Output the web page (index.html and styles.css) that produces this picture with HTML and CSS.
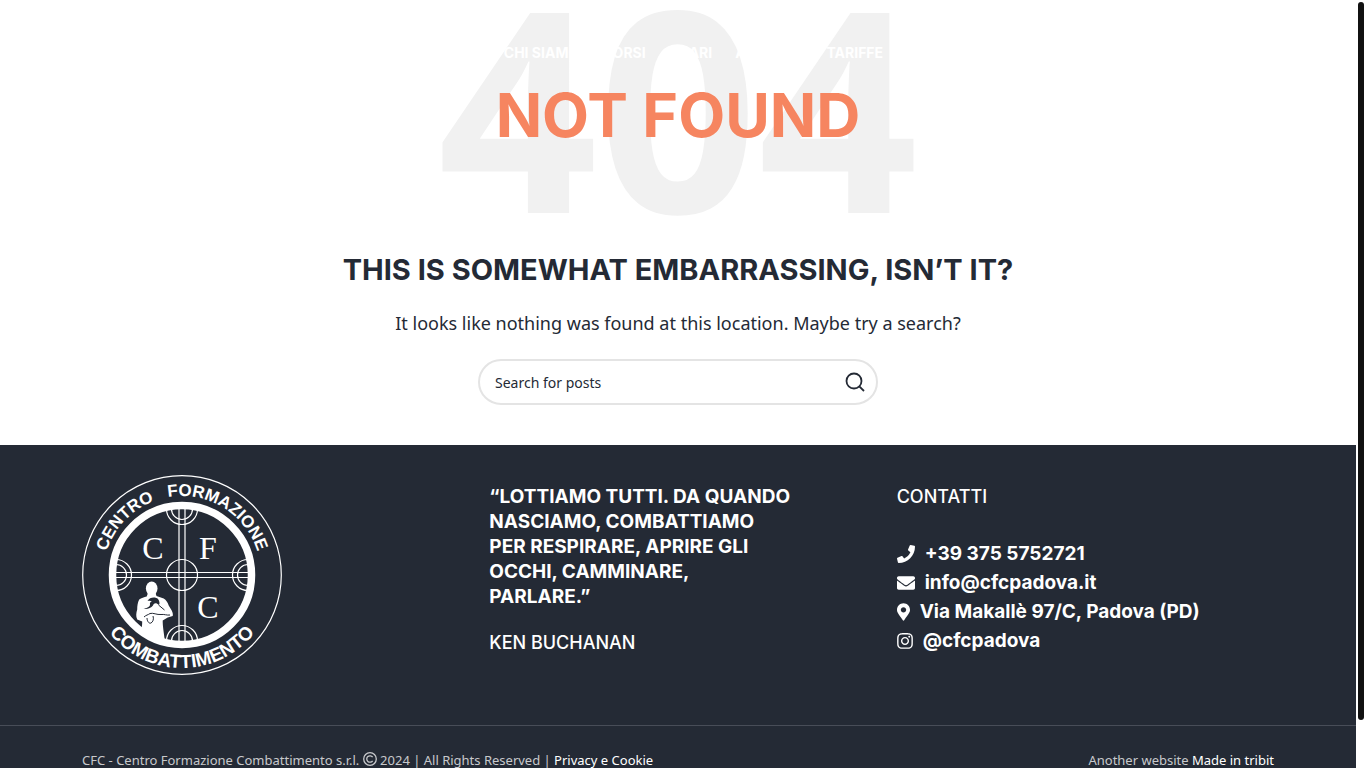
FILE: index.html
```html
<!DOCTYPE html>
<html lang="en">
<head>
  <meta charset="UTF-8" />
  <title>Page not found - CFC Padova</title>
  <meta name="viewport" content="width=device-width, initial-scale=1" />
  <link rel="stylesheet" href="styles.css">
</head>
<body>
  <header class="header">
    <div class="container header-row">
      <a class="header-logo" href="#" aria-label="CFC Padova"><svg viewBox="0 0 200 200"><use href="#cfc-logo" /></svg></a>
      <nav class="menu">
        <a href="#">HOME</a>
        <a href="#">CHI SIAMO</a>
        <a href="#">CORSI</a>
        <a href="#">ORARI</a>
        <a href="#">AGONISTI</a>
        <a href="#">TARIFFE</a>
      </nav>
    </div>
  </header>

  <main class="not-found">
    <div class="hero">
      <span class="hero-code" aria-hidden="true">404</span>
      <h1>NOT FOUND</h1>
    </div>
    <h2>THIS IS SOMEWHAT EMBARRASSING, ISN’T IT?</h2>
    <p>It looks like nothing was found at this location. Maybe try a search?</p>
    <form class="search">
      <input type="text" placeholder="Search for posts" aria-label="Search for posts">
      <button type="submit" aria-label="Search">
        <svg viewBox="0 0 20 20"><circle cx="9" cy="9" r="7.500" /><path d="M14.300 14.300l4.700 4.700" /></svg>
      </button>
    </form>
  </main>

  <footer class="footer">
    <div class="container footer-cols">
      <div>
        <svg class="footer-logo" viewBox="0 0 200 200" role="img" aria-label="Centro Formazione Combattimento">
          <defs>
            <path id="arc-top" d="M21 100a79 79 0 0 1 158 0" />
            <path id="arc-bottom" d="M7 100a93 93 0 0 0 186 0" />
            <clipPath id="ring-clip"><circle cx="100" cy="100" r="67" /></clipPath>
          </defs>
          <g id="cfc-logo">
            <g fill="none" stroke="currentColor">
              <circle cx="100" cy="100" r="99.300" stroke-width="1.200" />
              <circle cx="100" cy="100" r="69.500" stroke-width="7.500" />
              <g clip-path="url(#ring-clip)" stroke-width="1.200">
                <path d="M97 30v140M103 30v140M30 97.500h140M30 102.500h140" />
                <circle cx="100" cy="100" r="15.500" />
                <circle cx="100" cy="34" r="15.500" /><circle cx="100" cy="34" r="10.500" />
                <circle cx="100" cy="166" r="15.500" /><circle cx="100" cy="166" r="10.500" />
                <circle cx="34" cy="100" r="15.500" /><circle cx="34" cy="100" r="10.500" />
                <circle cx="166" cy="100" r="15.500" /><circle cx="166" cy="100" r="10.500" />
              </g>
            </g>
            <g fill="currentColor">
              <ellipse cx="69.700" cy="113.500" rx="5.800" ry="7" />
              <path d="M66 118h7.500l1 3 7.200 2.500c2.500 1.500 4 4 5 7l3 5c1 2 1.500 4 1 5.500l-5 1.500-5 3c0 6 1 11 2 19-8 0-17-3-24-7 1-4 1.500-7 1.500-11l-5-2c-1.500-3-1-7 0-10 0-4 .5-7 2-10 2-1.500 5-2.500 7.500-3z" />
            </g>
            <g class="logo-lines">
              <path d="M65.500 126c2-4 8-4.500 10.500-2 1.500 2 2 4.500 1 6-3-2.500-5-2-6 .5-2 2.500-5 4-9.500 3.500 2.500-1 6-1.500 6.500-4-.5-2 .5-3.500 2-3.500-1.500-1-3-1-4.500-.5z" />
              <path class="thin" d="M62 142c2-2 4-2 6-3.500 3-1 7 1.500 11 1 3-.5 6 1 9 .5M65 143c0 3 2 6 4 5s3-4 2-7M76.500 130l6 5" />
            </g>
            <g class="logo-letters">
              <text x="71" y="84">C</text>
              <text x="126" y="84">F</text>
              <text x="126" y="143">C</text>
            </g>
            <text class="logo-top"><textPath href="#arc-top" startOffset="50%">CENTRO&#160;&#160;&#160;FORMAZIONE</textPath></text>
            <text class="logo-bottom"><textPath href="#arc-bottom" startOffset="50%">COMBATTIMENTO</textPath></text>
          </g>
        </svg>
      </div>
      <div class="quote">
        <h4>“LOTTIAMO TUTTI. DA QUANDO<br>NASCIAMO, COMBATTIAMO<br>PER RESPIRARE, APRIRE GLI<br>OCCHI, CAMMINARE,<br>PARLARE.”</h4>
        <p>KEN BUCHANAN</p>
      </div>
      <div class="contacts">
        <h5>CONTATTI</h5>
        <ul>
          <li><a href="#"><svg width="18" height="18" viewBox="0 0 512 512"><path d="M493.400 24.600l-104-24c-11.300-2.600-22.900 3.300-27.500 13.900l-48 112c-4.200 9.800-1.400 21.300 6.900 28l60.600 49.600c-36 76.700-98.900 140.500-177.200 177.200l-49.600-60.600c-6.800-8.300-18.200-11.100-28-6.900l-112 48C3.900 366.500-2 378.100.6 389.400l24 104C27.100 504.200 36.700 512 48 512c256.100 0 464-207.500 464-464 0-11.200-7.700-20.900-18.600-23.400z" /></svg>+39 375 5752721</a></li>
          <li><a href="#"><svg width="18" height="18" viewBox="0 0 512 512"><path d="M502.300 190.800c3.900-3.100 9.700-.2 9.700 4.700V400c0 26.500-21.500 48-48 48H48c-26.500 0-48-21.500-48-48V195.600c0-5 5.700-7.800 9.700-4.700 22.400 17.400 52.100 39.500 154.100 113.600 21.100 15.400 56.700 47.800 92.200 47.600 35.700.3 72-32.800 92.300-47.600 102-74.100 131.600-96.300 154-113.700zM256 320c23.200.4 56.600-29.200 73.400-41.400 132.700-96.300 142.800-104.700 173.400-128.700 5.800-4.500 9.200-11.500 9.200-18.900v-19c0-26.500-21.500-48-48-48H48c-26.500 0-48 21.500-48 48v19c0 7.400 3.400 14.300 9.200 18.900 30.600 23.900 40.700 32.400 173.400 128.700 16.800 12.200 50.200 41.800 73.400 41.400z" /></svg>info@cfcpadova.it</a></li>
          <li><a href="#"><svg width="13" height="18" viewBox="0 0 384 512"><path d="M172.300 501.700C27 291 0 269.400 0 192 0 86 86 0 192 0s192 86 192 192c0 77.400-27 99-172.300 309.700-9.500 13.800-29.900 13.800-39.400 0zM192 272c44.200 0 80-35.800 80-80s-35.800-80-80-80-80 35.800-80 80 35.800 80 80 80z" /></svg>Via Makallè 97/C, Padova (PD)</a></li>
          <li><a href="#"><svg width="16" height="18" viewBox="0 0 448 512"><path d="M224.100 141c-63.600 0-114.900 51.300-114.900 114.900s51.300 114.900 114.900 114.900S339 319.500 339 255.900 287.700 141 224.100 141zm0 189.600c-41.100 0-74.700-33.500-74.700-74.700s33.500-74.700 74.700-74.700 74.700 33.500 74.700 74.700-33.600 74.700-74.700 74.700zm146.400-194.300c0 14.900-12 26.800-26.800 26.800-14.900 0-26.800-12-26.800-26.800s12-26.800 26.800-26.800 26.800 12 26.800 26.800zm76.100 27.200c-1.700-35.900-9.900-67.700-36.200-93.900-26.200-26.200-58-34.400-93.900-36.200-37-2.100-147.900-2.100-184.900 0-35.800 1.700-67.600 9.900-93.900 36.100s-34.400 58-36.200 93.900c-2.100 37-2.100 147.900 0 184.900 1.700 35.900 9.900 67.700 36.200 93.900s58 34.400 93.900 36.200c37 2.100 147.900 2.100 184.900 0 35.900-1.700 67.700-9.900 93.900-36.200 26.200-26.200 34.400-58 36.200-93.900 2.100-37 2.100-147.800 0-184.800zM398.800 388c-7.800 19.600-22.900 34.700-42.600 42.600-29.500 11.700-99.500 9-132.100 9s-102.700 2.600-132.100-9c-19.600-7.800-34.700-22.900-42.600-42.600-11.700-29.500-9-99.500-9-132.100s-2.600-102.700 9-132.100c7.800-19.600 22.900-34.700 42.600-42.600 29.500-11.700 99.500-9 132.100-9s102.700-2.600 132.100 9c19.600 7.800 34.700 22.900 42.600 42.600 11.700 29.500 9 99.500 9 132.100s2.700 102.700-9 132.100z" /></svg>@cfcpadova</a></li>
        </ul>
      </div>
    </div>
    <div class="copyright">
      <div class="container copyright-row">
        <span>CFC - Centro Formazione Combattimento s.r.l. <svg class="copy-icon" viewBox="0 0 14 14" role="img" aria-label="Copyright"><circle cx="7" cy="7" r="6.300" /><path d="M9.600 5.200a3.200 3.200 0 1 0 0 3.600" /></svg> 2024 | All Rights Reserved | <a href="#">Privacy e Cookie</a></span>
        <span>Another website <a href="#">Made in tribit</a></span>
      </div>
    </div>
  </footer>

  <div class="scrollbar" aria-hidden="true"><div class="scrollbar-thumb"></div></div>
</body>
</html>
```
FILE: styles.css
```css
* {
  box-sizing: border-box;
}
html {
  scrollbar-width: none;
}
body {
  margin: 0;
  padding-right: 10px;
  font-family: "Noto Sans", sans-serif;
  background: #fff;
  color: #242a35;
}
h1, h2, h4, h5, p, ul {
  margin: 0;
}
a {
  color: inherit;
  text-decoration: none;
}
.container {
  max-width: 1222px;
  margin: 0 auto;
  padding: 0 15px;
}

/* custom scrollbar, fixed on the right edge */
.scrollbar {
  position: fixed;
  top: 0;
  right: 0;
  bottom: 0;
  width: 10px;
  padding: 2px;
  background: #fff;
}
.scrollbar-thumb {
  height: 94%;
  border-radius: 3px;
  background: #111;
}

/* header lies over the page title */
.header {
  position: absolute;
  top: 0;
  left: 0;
  right: 10px;
  z-index: 2;
  color: #fff;
}
.header-row {
  height: 105px;
  display: flex;
  align-items: center;
}
.header-logo {
  width: 94px;
  --logo-bg: #fff;
}
.header-logo svg {
  display: block;
  width: 100%;
}
.menu {
  margin-left: 262px;
  display: flex;
  gap: 23px;
  font: bold 14px Inter, sans-serif;
}

.not-found {
  padding-bottom: 40px;
  text-align: center;
}
.hero {
  height: 230px;
  display: grid;
  justify-items: center;
  align-items: center;
}
.hero-code,
.hero h1 {
  grid-area: 1 / 1;
}
.hero-code {
  align-self: start;
  font-size: 280px;
  font-weight: bold;
  line-height: 210px;
  color: #f1f1f1;
}
.hero h1 {
  font: bold 61px/62px Inter, sans-serif;
  color: #f68560;
}
.not-found h2 {
  margin-top: 20px;
  font: bold 29px/40px Inter, sans-serif;
}
.not-found p {
  margin-top: 20px;
  font-size: 18px;
  line-height: 26px;
}
.search {
  width: 400px;
  max-width: 100%;
  height: 46px;
  margin: 23px auto 0;
  display: flex;
  align-items: center;
  border: 2px solid #e4e4e4;
  border-radius: 23px;
}
.search input {
  flex: 1;
  min-width: 0;
  padding: 0 15px;
  border: 0;
  outline: 0;
  background: none;
  font: 14px "Noto Sans", sans-serif;
  color: #242a35;
}
.search input::placeholder {
  color: #242a35;
}
.search button {
  padding: 0 11px;
  border: 0;
  background: none;
  cursor: pointer;
}
.search svg {
  display: block;
  width: 20px;
  height: 20px;
  fill: none;
  stroke: #242a35;
  stroke-width: 1.8;
}

.footer {
  background: #242a35;
  color: #fff;
  --logo-bg: #242a35;
}
.footer-cols {
  display: grid;
  grid-template-columns: repeat(3, 1fr);
  gap: 30px;
  min-height: 280px;
  padding-top: 30px;
  padding-bottom: 46px;
}
.footer-logo {
  display: block;
  width: 200px;
  height: 200px;
}
.logo-lines {
  fill: var(--logo-bg);
}
.logo-lines .thin {
  fill: none;
  stroke: var(--logo-bg);
}
.logo-letters {
  font: 32px "Liberation Serif", serif;
  fill: currentColor;
  text-anchor: middle;
}
.logo-top,
.logo-bottom {
  font: bold 17px "Liberation Sans", sans-serif;
  fill: currentColor;
  text-anchor: middle;
}
.logo-bottom {
  font-size: 19px;
}
.quote h4 {
  padding-top: 9px;
  font: bold 19px/25px Inter, sans-serif;
  white-space: nowrap;
}
.quote p {
  margin-top: 21px;
  font: 500 18px/25px Inter, sans-serif;
}
.contacts h5 {
  padding-top: 9px;
  font: 500 18px/25px Inter, sans-serif;
}
.contacts ul {
  margin-top: 30px;
  padding: 0;
  list-style: none;
  font: bold 19px/29px Inter, sans-serif;
}
.contacts a {
  display: flex;
  align-items: center;
  gap: 10px;
}
.contacts svg {
  fill: currentColor;
}
.copyright {
  border-top: 1px solid #484d58;
  padding: 23px 0;
}
.copyright-row {
  display: flex;
  justify-content: space-between;
  font-size: 13px;
  line-height: 22px;
  color: #c8c9cc;
}
.copyright a {
  color: #fff;
}
.copy-icon {
  width: 14px;
  height: 14px;
  vertical-align: -1px;
  fill: none;
  stroke: currentColor;
  stroke-width: 1.3;
}
```
